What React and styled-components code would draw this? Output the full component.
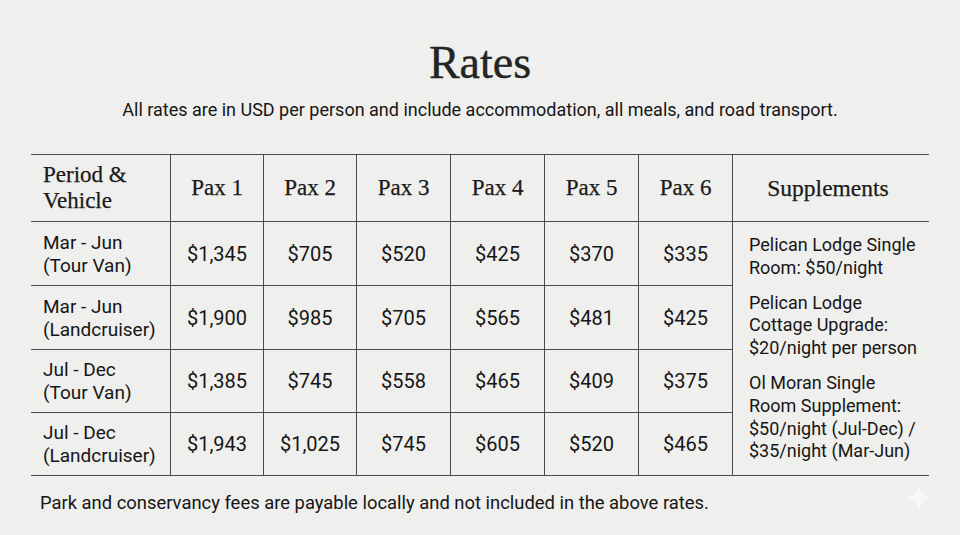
import React from 'react'
import styled, { createGlobalStyle } from 'styled-components'

const paxHeaders = ['Pax 1', 'Pax 2', 'Pax 3', 'Pax 4', 'Pax 5', 'Pax 6']

const rows = [
  { period: ['Mar - Jun', '(Tour Van)'], prices: ['$1,345', '$705', '$520', '$425', '$370', '$335'] },
  { period: ['Mar - Jun', '(Landcruiser)'], prices: ['$1,900', '$985', '$705', '$565', '$481', '$425'] },
  { period: ['Jul - Dec', '(Tour Van)'], prices: ['$1,385', '$745', '$558', '$465', '$409', '$375'] },
  { period: ['Jul - Dec', '(Landcruiser)'], prices: ['$1,943', '$1,025', '$745', '$605', '$520', '$465'] },
]

const supplements = [
  ['Pelican Lodge Single', 'Room: $50/night'],
  ['Pelican Lodge', 'Cottage Upgrade:', '$20/night per person'],
  ['Ol Moran Single', 'Room Supplement:', '$50/night (Jul-Dec) /', '$35/night (Mar-Jun)'],
]

export default function App() {
  return (
    <>
      <GlobalStyle />
      <Page>
        <Title>Rates</Title>
        <Subtitle>
          All rates are in USD per person and include accommodation, all meals, and road transport.
        </Subtitle>
        <RateGrid>
          <HeadCell $align='left'>
            Period &amp;
            <br />
            Vehicle
          </HeadCell>
          {paxHeaders.map((h) => (
            <HeadCell key={h}>{h}</HeadCell>
          ))}
          <HeadCell $last>Supplements</HeadCell>

          {rows.map((r) => (
            <React.Fragment key={r.period.join()}>
              <PeriodCell>
                {r.period[0]}
                <br />
                {r.period[1]}
              </PeriodCell>
              {r.prices.map((p, j) => (
                <PriceCell key={j}>{p}</PriceCell>
              ))}
            </React.Fragment>
          ))}

          <SupplementCell>
            {supplements.map((lines) => (
              <Note key={lines[0] + lines[1]}>
                {lines.map((l) => (
                  <span key={l}>{l}</span>
                ))}
              </Note>
            ))}
          </SupplementCell>
        </RateGrid>
        <Footnote>
          Park and conservancy fees are payable locally and not included in the above rates.
        </Footnote>
        <Sparkle viewBox='0 0 24 24'>
          <path d='M12 0 C13 8 16 11 24 12 C16 13 13 16 12 24 C11 16 8 13 0 12 C8 11 11 8 12 0 Z' />
        </Sparkle>
      </Page>
    </>
  )
}

const line = '1.5px solid #4b4b4b'

const GlobalStyle = createGlobalStyle`
  body {
    margin: 0;
    background: #efefed;
  }
  * {
    box-sizing: border-box;
  }
`

const Page = styled.div`
  position: relative;
  width: 960px;
  height: 535px;
  overflow: hidden;
  background: #efefed;
  color: #161616;
  font-family: Roboto, 'Liberation Sans', sans-serif;
  display: flex;
  flex-direction: column;
  align-items: center;
`

const Title = styled.h1`
  margin: 37px 0 0;
  font-family: 'Liberation Serif', serif;
  font-weight: 400;
  font-size: 46px;
  line-height: 52px;
  color: #222524;
  -webkit-text-stroke: 0.4px #222524;
`

const Subtitle = styled.p`
  margin: 9px 0 0;
  font-size: 18px;
  line-height: 24px;
`

const RateGrid = styled.div`
  margin-top: 32px;
  display: grid;
  grid-template-columns: 140px 93px 93px 94px 94px 94px 94px 196px;
  grid-template-rows: 67px 64px 64px 63px 63px;
  border-top: ${line};
`

const Cell = styled.div`
  display: flex;
  align-items: center;
  border-bottom: ${line};
  border-right: ${line};
`

const HeadCell = styled(Cell)`
  justify-content: ${(p) => (p.$align === 'left' ? 'flex-start' : 'center')};
  padding-left: ${(p) => (p.$align === 'left' ? '12px' : '0')};
  padding-right: ${(p) => (p.$last ? '6px' : '0')};
  border-right: ${(p) => (p.$last ? 'none' : line)};
  font-family: 'Liberation Serif', serif;
  font-size: ${(p) => (p.$last ? '23.5px' : '23px')};
  line-height: 26px;
  color: #1a1a1a;
  -webkit-text-stroke: 0.25px #1a1a1a;
`

const PeriodCell = styled(Cell)`
  padding-left: 12px;
  font-size: 19px;
  line-height: 23px;
`

const PriceCell = styled(Cell)`
  justify-content: center;
  font-size: 20px;
`

const SupplementCell = styled.div`
  grid-column: 8;
  grid-row: 2 / span 4;
  border-bottom: ${line};
  padding: 12px 0 0 16px;
  font-size: 18px;
  line-height: 22.8px;
  display: flex;
  flex-direction: column;
  gap: 12px;
`

const Note = styled.div`
  display: flex;
  flex-direction: column;
  white-space: nowrap;
`

const Footnote = styled.p`
  align-self: flex-start;
  margin: 15px 0 0 40px;
  font-size: 18.4px;
  line-height: 24px;
`

const Sparkle = styled.svg`
  position: absolute;
  right: 26px;
  bottom: 22px;
  width: 30px;
  height: 30px;
  fill: #f7f7f5;
`
